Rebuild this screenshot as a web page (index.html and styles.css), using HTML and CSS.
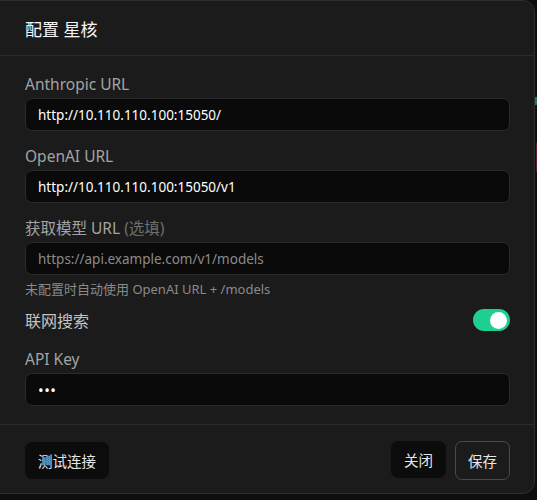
FILE: index.html
```html
<!DOCTYPE html>
<html lang="zh-CN">
<head>
  <meta charset="UTF-8" />
  <meta name="viewport" content="width=device-width, initial-scale=1.0"/>
  <title>配置 星核</title>
  <link rel="stylesheet" href="styles.css">
</head>
<body>
  <div class="backdrop">
    <span class="mark-green"></span>
    <span class="mark-red"></span>
  </div>
  <div class="dialog">
    <div class="dialog-header">配置 星核</div>
    <div class="dialog-body">
      <div class="field">
        <label>Anthropic URL</label>
        <input type="text" value="http://10.110.110.100:15050/" />
      </div>
      <div class="field">
        <label>OpenAI URL</label>
        <input type="text" value="http://10.110.110.100:15050/v1" />
      </div>
      <div class="field">
        <label>获取模型 URL <span class="optional">(选填)</span></label>
        <input type="text" placeholder="https://api.example.com/v1/models" />
        <div class="hint">未配置时自动使用 OpenAI URL + /models</div>
      </div>
      <div class="switch-row">
        <span>联网搜索</span>
        <span class="switch on"><span class="knob"></span></span>
      </div>
      <div class="field">
        <label>API Key</label>
        <input type="password" value="abc" />
      </div>
    </div>
    <div class="dialog-footer">
      <button class="btn">测试连接</button>
      <div class="actions">
        <button class="btn">关闭</button>
        <button class="btn outline">保存</button>
      </div>
    </div>
  </div>
</body>
</html>
```

FILE: styles.css
```css
body {
  margin: 0;
  font-family: 'Noto Sans', 'Noto Sans CJK SC', sans-serif;
  background-color: #0e0e0e;
  color: #e3e3e3;
  overflow: hidden;
}
.backdrop {
  position: absolute;
  inset: 0;
}
.mark-green {
  position: absolute;
  left: 535px;
  top: 97px;
  width: 2px;
  height: 8px;
  background-color: #1f7a5a;
}
.mark-red {
  position: absolute;
  left: 536px;
  top: 143px;
  width: 2px;
  height: 29px;
  background-color: #5a1f26;
}
.dialog {
  position: relative;
  margin-left: -12px;
  width: 547px;
  height: 494px;
  box-sizing: border-box;
  background-color: #1b1b1b;
  border: 1px solid #2e2e2e;
  border-radius: 12px;
  display: flex;
  flex-direction: column;
}
.dialog-header {
  height: 54px;
  display: flex;
  align-items: center;
  padding-left: 36px;
  font-size: 17px;
  font-weight: 400;
  color: #f5f5f5;
  border-bottom: 1px solid #2a2a2a;
}
.dialog-body {
  padding: 18px 24px 0 36px;
  flex: 1;
}
.field {
  margin-bottom: 15px;
}
.field label {
  display: block;
  font-size: 15.5px;
  line-height: 20px;
  color: #a3a3a3;
  margin-bottom: 4px;
}
.optional {
  color: #6e6e6e;
}
input {
  display: block;
  width: 100%;
  height: 33px;
  box-sizing: border-box;
  padding: 0 12px;
  background-color: #0a0a0a;
  border: 1px solid #2a2a2a;
  border-radius: 7px;
  color: #ffffff;
  font-family: inherit;
  font-size: 13.5px;
  outline: none;
}
input::placeholder {
  color: #8a8a8a;
}
input[type=password] {
  font-size: 15px;
  letter-spacing: 0.5px;
}
.hint {
  margin-top: 5px;
  font-size: 13px;
  line-height: 18px;
  color: #8a8a8a;
}
.switch-row {
  display: flex;
  justify-content: space-between;
  align-items: center;
  font-size: 16px;
  color: #c4c4c4;
  margin: -5px 0 17px;
  height: 24px;
}
.switch {
  width: 37px;
  height: 22px;
  box-sizing: border-box;
  border-radius: 11px;
  background-color: #1fcf8f;
  display: flex;
  align-items: center;
  justify-content: flex-end;
  padding-right: 3px;
}
.knob {
  width: 17px;
  height: 17px;
  border-radius: 50%;
  background-color: #ffffff;
}
.dialog-footer {
  display: flex;
  justify-content: space-between;
  align-items: center;
  padding: 16px 24px 13px 36px;
  border-top: 1px solid #2a2a2a;
}
.actions {
  display: flex;
  gap: 9px;
}
.btn {
  height: 37px;
  padding: 0 12px;
  background-color: #0c0c0c;
  border: 1px solid #0c0c0c;
  border-radius: 7px;
  color: #e6e6e6;
  font-family: inherit;
  font-size: 14.5px;
}
.btn.outline {
  background-color: transparent;
  border-color: #4a4a4a;
  height: 39px;
}
```
